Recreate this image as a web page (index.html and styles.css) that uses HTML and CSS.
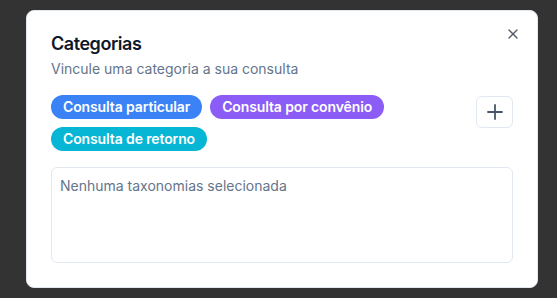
FILE: index.html
```html
<!DOCTYPE html>
<html lang="pt-BR">
<head>
<meta charset="utf-8">
<link rel="stylesheet" href="styles.css">
</head>
<body>
<div class="dialog">
  <button class="close" aria-label="Fechar">
    <svg viewBox="0 0 24 24" width="16" height="16" fill="none" stroke="currentColor" stroke-width="2" stroke-linecap="round" stroke-linejoin="round"><path d="M18 6 6 18"/><path d="m6 6 12 12"/></svg>
  </button>
  <div class="header">
    <h2 class="title">Categorias</h2>
    <p class="desc">Vincule uma categoria a sua consulta</p>
  </div>
  <div class="row">
    <div class="chips">
      <span class="chip blue">Consulta particular</span>
      <span class="chip violet">Consulta por convênio</span>
      <span class="chip cyan">Consulta de retorno</span>
    </div>
    <button class="add" aria-label="Adicionar">
      <svg viewBox="0 0 24 24" width="24" height="24" fill="none" stroke="currentColor" stroke-width="1.8" stroke-linecap="round" stroke-linejoin="round"><path d="M5 12h14"/><path d="M12 5v14"/></svg>
    </button>
  </div>
  <div class="box">Nenhuma taxonomias selecionada</div>
</div>
</body>
</html>
```

FILE: styles.css
```css
* { box-sizing: border-box; }
html, body { margin: 0; height: 100%; }
body {
  background: #333333;
  font-family: Inter, "Noto Sans", sans-serif;
  padding: 10px 0 0 26px;
}
.dialog {
  position: relative;
  width: 512px;
  background: #ffffff;
  border: 1px solid #e2e8f0;
  border-radius: 8px;
  padding: 24px;
  display: flex;
  flex-direction: column;
  gap: 16px;
}
.close {
  position: absolute;
  top: 15px;
  right: 16px;
  width: 16px;
  height: 16px;
  padding: 0;
  border: 0;
  background: none;
  color: #0f172a;
  opacity: 0.7;
  display: flex;
}
.header { display: flex; flex-direction: column; gap: 6px; }
.title {
  margin: 0;
  font-size: 18px;
  line-height: 18px;
  font-weight: 600;
  letter-spacing: -0.45px;
  color: #0f172a;
}
.desc {
  margin: 0;
  font-size: 14px;
  line-height: 20px;
  color: #64748b;
}
.row { display: flex; align-items: flex-start; gap: 16px; }
.chips { flex: 1; display: flex; flex-wrap: wrap; gap: 8px; }
.chip {
  height: 24px;
  line-height: 24px;
  padding: 0 12px;
  border-radius: 999px;
  color: #ffffff;
  font-size: 14px;
  font-weight: 600;
  letter-spacing: -0.12px;
}
.blue { background: #3b82f6; }
.violet { background: #8b5cf6; }
.cyan { background: #06b6d4; }
.add {
  width: 37px;
  height: 32px;
  margin-top: 1px;
  border: 1px solid #e2e8f0;
  border-radius: 6px;
  background: #ffffff;
  color: #475569;
  display: flex;
  align-items: center;
  justify-content: center;
  padding: 0;
}
.box {
  height: 96px;
  border: 1px solid #e2e8f0;
  border-radius: 6px;
  padding: 8px;
  font-size: 14px;
  line-height: 20px;
  color: #64748b;
}
```
